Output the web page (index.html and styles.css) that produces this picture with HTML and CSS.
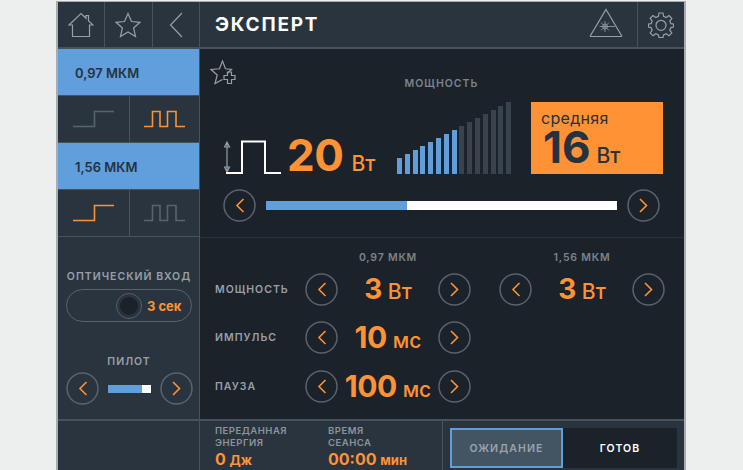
FILE: index.html
```html
<!DOCTYPE html>
<html lang="ru">
<head>
  <meta charset="UTF-8" />
  <title>Эксперт</title>
  <link rel="stylesheet" href="styles.css">
</head>
<body>
  <svg class="defs" width="0" height="0">
    <symbol id="step" viewBox="0 0 41 18"><path d="M0 16.5H21.5V1.5H41" fill="none" stroke="currentColor" stroke-width="1.6"/></symbol>
    <symbol id="pulses" viewBox="0 0 41 18"><path d="M0 16.5H8.500V1.500H16V16.500H23.500V1.500H32V16.500H41" fill="none" stroke="currentColor" stroke-width="1.600"/></symbol>
    <symbol id="prev" viewBox="0 0 33 33"><circle cx="16.500" cy="16.500" r="15.500" fill="none" stroke="#59636d" stroke-width="1.500"/><path d="M20.500 10L14 16.500L20.500 23" fill="none" stroke="#ff9234" stroke-width="1.600"/></symbol>
    <symbol id="next" viewBox="0 0 33 33"><circle cx="16.500" cy="16.500" r="15.500" fill="none" stroke="#59636d" stroke-width="1.500"/><path d="M13 10L19.500 16.500L13 23" fill="none" stroke="#ff9234" stroke-width="1.600"/></symbol>
  </svg>

  <div class="app">
    <!-- Header -->
    <header class="topbar">
      <nav class="nav">
        <button class="nav-btn">
          <svg width="26" height="26" viewBox="0 0 26 26"><path d="M1 13L13 1.500L18 6.300V3.500H20.500V8.700L25 13H21.500V24.500H4.500V13Z" class="line"/></svg>
        </button>
        <button class="nav-btn">
          <svg width="26" height="26" viewBox="0 0 26 26"><path d="M13 1.500L16.500 9.500L25 10.300L18.600 16L20.500 24.500L13 20L5.500 24.500L7.400 16L1 10.300L9.500 9.500Z" class="line"/></svg>
        </button>
        <button class="nav-btn">
          <svg width="14" height="26" viewBox="0 0 14 26"><path d="M13 1L1.500 13L13 25" class="line"/></svg>
        </button>
      </nav>
      <h1 class="title">ЭКСПЕРТ</h1>
      <div class="top-icons">
        <div class="laser">
          <svg width="34" height="30" viewBox="0 0 34 30">
            <path d="M17 1.500L32.500 27.500Q33 28.500 32 28.500H2Q1 28.500 1.500 27.500Z" class="line"/>
            <circle cx="16" cy="18.500" r="2.500" class="line thin"/>
            <path d="M16 13V24M10.500 18.500H26M12.100 14.600L19.900 22.400M19.900 14.600L12.100 22.400" class="line thin"/>
          </svg>
        </div>
        <div class="gear">
          <svg width="26" height="26" viewBox="0 0 26 26">
            <path d="M11 1H15L15.600 4.400L18.200 5.500L21 3.500L23.800 6.300L21.800 9.100L22.900 11.700L25.500 12V15L22.900 15.600L21.800 18.200L23.800 21L21 23.800L18.200 21.800L15.600 22.900L15 25.500H11L10.400 22.900L7.800 21.800L5 23.800L2.200 21L4.200 18.200L3.100 15.600L0.500 15V12L3.100 11.700L4.200 9.100L2.200 6.300L5 3.500L7.800 5.500L10.400 4.400Z" class="line"/>
            <circle cx="13" cy="13.300" r="5" class="line"/>
          </svg>
        </div>
      </div>
    </header>

    <div class="middle">
      <!-- Left column -->
      <aside class="side">
        <div class="wave-label">0,97 МКМ</div>
        <div class="wave-modes">
          <div class="mode off"><svg width="41" height="18"><use href="#step"/></svg></div>
          <div class="mode on"><svg width="41" height="18"><use href="#pulses"/></svg></div>
        </div>
        <div class="wave-label">1,56 МКМ</div>
        <div class="wave-modes">
          <div class="mode on"><svg width="41" height="18"><use href="#step"/></svg></div>
          <div class="mode off"><svg width="41" height="18"><use href="#pulses"/></svg></div>
        </div>
        <div class="side-controls">
          <div class="caption">ОПТИЧЕСКИЙ ВХОД</div>
          <div class="pill">
            <span class="knob"></span>
            <span class="pill-text">3 сек</span>
          </div>
          <div class="caption pilot-caption">ПИЛОТ</div>
          <div class="pilot">
            <svg class="round" width="33" height="33"><use href="#prev"/></svg>
            <div class="pilot-bar"><span class="pilot-fill"></span></div>
            <svg class="round" width="33" height="33"><use href="#next"/></svg>
          </div>
        </div>
      </aside>

      <!-- Main area -->
      <main class="main">
        <section class="power">
          <div class="power-head">
            <svg width="27" height="25" viewBox="0 0 27 25">
              <path d="M17 13.500L21.500 9.500L15.500 8.800L12.500 1L9.500 8.800L1 9.500L7.200 15L5 23.500L12.500 19.500" class="line"/>
              <path d="M17.500 12H21.500V15.500H25V19.500H21.500V23.500H17.500V19.500H14V15.500H17.500Z" class="line"/>
            </svg>
            <div class="power-title">МОЩНОСТЬ</div>
          </div>
          <div class="power-row">
            <svg class="pulse-icon" width="57" height="34" viewBox="0 0 57 34">
              <path d="M3 2V32M0.500 7L3 2L5.500 7ZM0.500 27L3 32L5.500 27Z" class="line"/>
              <path d="M2 33H18V1.500H41V33H57" fill="none" stroke="#fff" stroke-width="2"/>
            </svg>
            <div class="big-value">20<span class="unit">Вт</span></div>
            <div class="bars">
              <i class="bar lit" style="height:16px"></i>
              <i class="bar lit" style="height:20px"></i>
              <i class="bar lit" style="height:24px"></i>
              <i class="bar lit" style="height:28px"></i>
              <i class="bar lit" style="height:32px"></i>
              <i class="bar lit" style="height:36px"></i>
              <i class="bar lit" style="height:40px"></i>
              <i class="bar lit" style="height:44px"></i>
              <i class="bar" style="height:48px"></i>
              <i class="bar" style="height:52px"></i>
              <i class="bar" style="height:56px"></i>
              <i class="bar" style="height:60px"></i>
              <i class="bar" style="height:64px"></i>
              <i class="bar" style="height:68px"></i>
              <i class="bar" style="height:72px"></i>
            </div>
            <div class="average">
              <div class="average-label">средняя</div>
              <div class="average-value">16<span class="unit">Вт</span></div>
            </div>
          </div>
          <div class="slider-row">
            <svg class="round" width="33" height="33"><use href="#prev"/></svg>
            <div class="slider"><span class="slider-fill"></span></div>
            <svg class="round" width="33" height="33"><use href="#next"/></svg>
          </div>
        </section>

        <section class="params">
          <div></div><div class="col-head">0,97 МКМ</div><div class="col-head second">1,56 МКМ</div>

          <div class="param-name">МОЩНОСТЬ</div>
          <div class="stepper">
            <svg class="round" width="33" height="33"><use href="#prev"/></svg>
            <div class="param-value small">3<span class="unit">Вт</span></div>
            <svg class="round" width="33" height="33"><use href="#next"/></svg>
          </div>
          <div class="stepper second">
            <svg class="round" width="33" height="33"><use href="#prev"/></svg>
            <div class="param-value small">3<span class="unit">Вт</span></div>
            <svg class="round" width="33" height="33"><use href="#next"/></svg>
          </div>

          <div class="param-name">ИМПУЛЬС</div>
          <div class="stepper">
            <svg class="round" width="33" height="33"><use href="#prev"/></svg>
            <div class="param-value">10<span class="unit">мс</span></div>
            <svg class="round" width="33" height="33"><use href="#next"/></svg>
          </div>
          <div></div>

          <div class="param-name">ПАУЗА</div>
          <div class="stepper">
            <svg class="round" width="33" height="33"><use href="#prev"/></svg>
            <div class="param-value">100<span class="unit">мс</span></div>
            <svg class="round" width="33" height="33"><use href="#next"/></svg>
          </div>
          <div></div>
        </section>
      </main>
    </div>

    <!-- Footer -->
    <footer class="bottom">
      <div class="bottom-left"></div>
      <div class="stats">
        <div class="stat stat-energy">
          <div class="stat-name">ПЕРЕДАННАЯ<br>ЭНЕРГИЯ</div>
          <div class="stat-value">0 <small>Дж</small></div>
        </div>
        <div class="stat">
          <div class="stat-name">ВРЕМЯ<br>СЕАНСА</div>
          <div class="stat-value">00:00 <small>мин</small></div>
        </div>
      </div>
      <div class="states">
        <div class="state waiting">ОЖИДАНИЕ</div>
        <div class="state ready">ГОТОВ</div>
      </div>
    </footer>
  </div>
</body>
</html>
```

FILE: styles.css
```css
* {
  box-sizing: border-box;
}

html, body {
  height: 470px;
  overflow: hidden;
}

body {
  margin: 0;
  background-color: #edefee;
  font-family: 'Inter', 'Liberation Sans', sans-serif;
  color: #8d949b;
}

.defs {
  display: block;
  height: 0;
}

.line {
  fill: none;
  stroke: #98a0a7;
  stroke-width: 1.2;
}

.line.thin {
  stroke-width: 0.8;
}

.round {
  display: block;
  flex: none;
}

.app {
  width: 630px;
  height: 469px;
  margin: 1px 0 0 56px;
  display: flex;
  flex-direction: column;
  border-left: 2px solid #a9adb0;
  border-right: 2px solid #a9adb0;
  border-top: 1px solid #a9adb0;
  background-color: #29343f;
}

/* header */
.topbar {
  display: flex;
  height: 47px;
  flex: none;
  border-bottom: 2px solid #47525c;
}

.nav {
  display: flex;
  width: 142px;
  flex: none;
  border-right: 1px solid #47525c;
}

.nav-btn {
  flex: 1;
  display: flex;
  align-items: center;
  justify-content: center;
  padding: 0;
  background: none;
  border: none;
  border-right: 1px solid #47525c;
}

.nav-btn:last-child {
  border-right: none;
}

.title {
  flex: 1;
  margin: 0;
  padding-left: 15px;
  font-size: 19px;
  line-height: 45px;
  font-weight: 700;
  letter-spacing: 1.800px;
  color: #fff;
}

.top-icons {
  display: flex;
  align-items: center;
}

.laser {
  padding: 0 14px 0 0;
  margin-top: 1px;
}

.gear {
  width: 47px;
  height: 45px;
  display: flex;
  align-items: center;
  justify-content: center;
  border-left: 1px solid #47525c;
}

.middle {
  display: flex;
  height: 370px;
  flex: none;
}

/* left column */
.side {
  width: 142px;
  flex: none;
  display: flex;
  flex-direction: column;
  border-right: 1px solid #47525c;
}

.wave-label {
  height: 47px;
  flex: none;
  padding-left: 17px;
  background-color: #609edc;
  border-bottom: 1px solid #47525c;
  font-size: 13px;
  line-height: 48px;
  font-weight: 600;
  color: #25323f;
}

.wave-modes {
  display: flex;
  height: 47px;
  flex: none;
  border-bottom: 1px solid #47525c;
}

.mode {
  display: flex;
  align-items: center;
  justify-content: center;
  width: 69px;
}

.mode:first-child {
  width: 72px;
  border-right: 1px solid #47525c;
}

.mode.on {
  color: #ff9234;
}

.mode.off {
  color: #59636d;
}

.side-controls {
  flex: 1;
  display: flex;
  flex-direction: column;
  align-items: center;
  padding: 33px 0 0 1px;
}

.caption {
  font-size: 10.500px;
  line-height: 13px;
  font-weight: 600;
  letter-spacing: 1px;
  color: #98a0a7;
  white-space: nowrap;
}

.pill {
  width: 126px;
  height: 33px;
  margin-top: 6px;
  display: flex;
  align-items: center;
  padding-left: 49px;
  border: 1.500px solid #59636d;
  border-radius: 17px;
}

.knob {
  width: 26px;
  height: 26px;
  flex: none;
  border: 1.500px solid #59636d;
  border-radius: 50%;
  box-shadow: inset 0 0 0 3px #29343f;
  background-color: #1b222a;
}

.pill-text {
  margin-left: 5px;
  font-size: 13px;
  font-weight: 700;
  color: #ff9234;
}

.pilot-caption {
  margin-top: 33px;
}

.pilot {
  display: flex;
  align-items: center;
  gap: 9px;
  margin-top: 4px;
}

.pilot-bar {
  width: 43px;
  height: 8px;
  background-color: #fff;
}

.pilot-fill {
  display: block;
  width: 34px;
  height: 8px;
  background-color: #609edc;
}

/* main area */
.main {
  flex: 1;
  min-width: 0;
  display: flex;
  flex-direction: column;
  background-color: #1b222a;
}

.power {
  height: 189px;
  flex: none;
  padding: 11px 20px 0 10px;
  border-bottom: 1px solid #29323b;
}

.power-head {
  display: grid;
  grid-template-columns: 27px 1fr 27px;
  height: 42px;
}

.power-title {
  padding: 17px 0 0 9px;
  text-align: center;
  font-size: 10.500px;
  line-height: 13px;
  font-weight: 600;
  letter-spacing: 1px;
  color: #7c848b;
}

.power-row {
  display: flex;
  align-items: flex-end;
  height: 72px;
  padding-left: 14px;
}

.pulse-icon {
  display: block;
  flex: none;
}

.big-value {
  width: 110px;
  flex: none;
  margin-left: 6px;
  font-size: 44px;
  line-height: 28px;
  font-weight: 700;
  letter-spacing: -0.500px;
  color: #ff9234;
  white-space: nowrap;
}

.unit {
  margin-left: 8px;
  font-size: 21px;
  line-height: 1;
  font-weight: 500;
  letter-spacing: 0;
}

.bars {
  display: flex;
  align-items: flex-end;
  gap: 2.800px;
  width: 115px;
  height: 72px;
  flex: none;
}

.bar {
  display: block;
  width: 5px;
  flex: none;
  background-color: #39434d;
}

.bar.lit {
  background-color: #609edc;
}

.average {
  width: 132px;
  height: 72px;
  flex: none;
  margin-left: 19px;
  padding: 6px 10px;
  background-color: #ff9234;
  color: #25323f;
}

.average-label {
  font-size: 16px;
  line-height: 20px;
  font-weight: 400;
  letter-spacing: 0.300px;
}

.average-value {
  margin-left: 2px;
  font-size: 44px;
  line-height: 38px;
  font-weight: 700;
  white-space: nowrap;
}

.average-value .unit {
  margin-left: 6px;
}

.slider-row {
  display: flex;
  align-items: center;
  gap: 10px;
  height: 33px;
  margin-top: 15px;
  padding-left: 13px;
  padding-right: 4px;
}

.slider {
  flex: 1;
  height: 9px;
  background-color: #fff;
}

.slider-fill {
  display: block;
  width: 141px;
  height: 9px;
  background-color: #609edc;
}

.params {
  display: grid;
  grid-template-columns: 90px 166px 194px;
  grid-template-rows: 16px 48px 49px 48px;
  align-items: center;
  padding: 11px 0 0 15px;
}

.second {
  margin-left: 28px;
}

.col-head {
  font-size: 10.500px;
  font-weight: 600;
  letter-spacing: 0.800px;
  text-align: center;
  color: #7c848b;
}

.param-name {
  font-size: 10.500px;
  font-weight: 600;
  letter-spacing: 1px;
  color: #98a0a7;
}

.stepper {
  display: flex;
  align-items: center;
  justify-content: space-between;
}

.param-value {
  font-size: 30px;
  line-height: 33px;
  font-weight: 700;
  letter-spacing: -0.500px;
  color: #ff9234;
  white-space: nowrap;
}

.param-value.small {
  font-size: 28px;
}

.param-value .unit {
  margin-left: 6px;
  font-size: 21px;
}

/* footer */
.bottom {
  display: flex;
  flex: 1;
  border-top: 2px solid #47525c;
  min-height: 0;
}

.bottom-left {
  width: 142px;
  flex: none;
  border-right: 1px solid #47525c;
}

.stats {
  display: flex;
  width: 243px;
  flex: none;
  padding: 4px 0 0 15px;
  border-right: 1px solid #47525c;
}

.stat-energy {
  width: 113px;
}

.stat-name {
  font-size: 9.500px;
  line-height: 12px;
  font-weight: 600;
  letter-spacing: 0.500px;
  color: #8d949b;
}

.stat-value {
  margin-top: 1px;
  font-size: 16px;
  line-height: 18px;
  font-weight: 700;
  color: #ff9234;
  white-space: nowrap;
}

.stat-value small {
  font-size: 13px;
}

.states {
  display: flex;
  height: 40px;
  margin: 7px 0 0 7px;
  background-color: #1b222a;
}

.state {
  width: 114px;
  display: flex;
  align-items: center;
  justify-content: center;
  font-size: 10.500px;
  font-weight: 600;
  letter-spacing: 1.100px;
}

.waiting {
  width: 113px;
  border: 2px solid #609edc;
  background-color: #435563;
  color: #98a4ad;
}

.ready {
  color: #fff;
}
```
